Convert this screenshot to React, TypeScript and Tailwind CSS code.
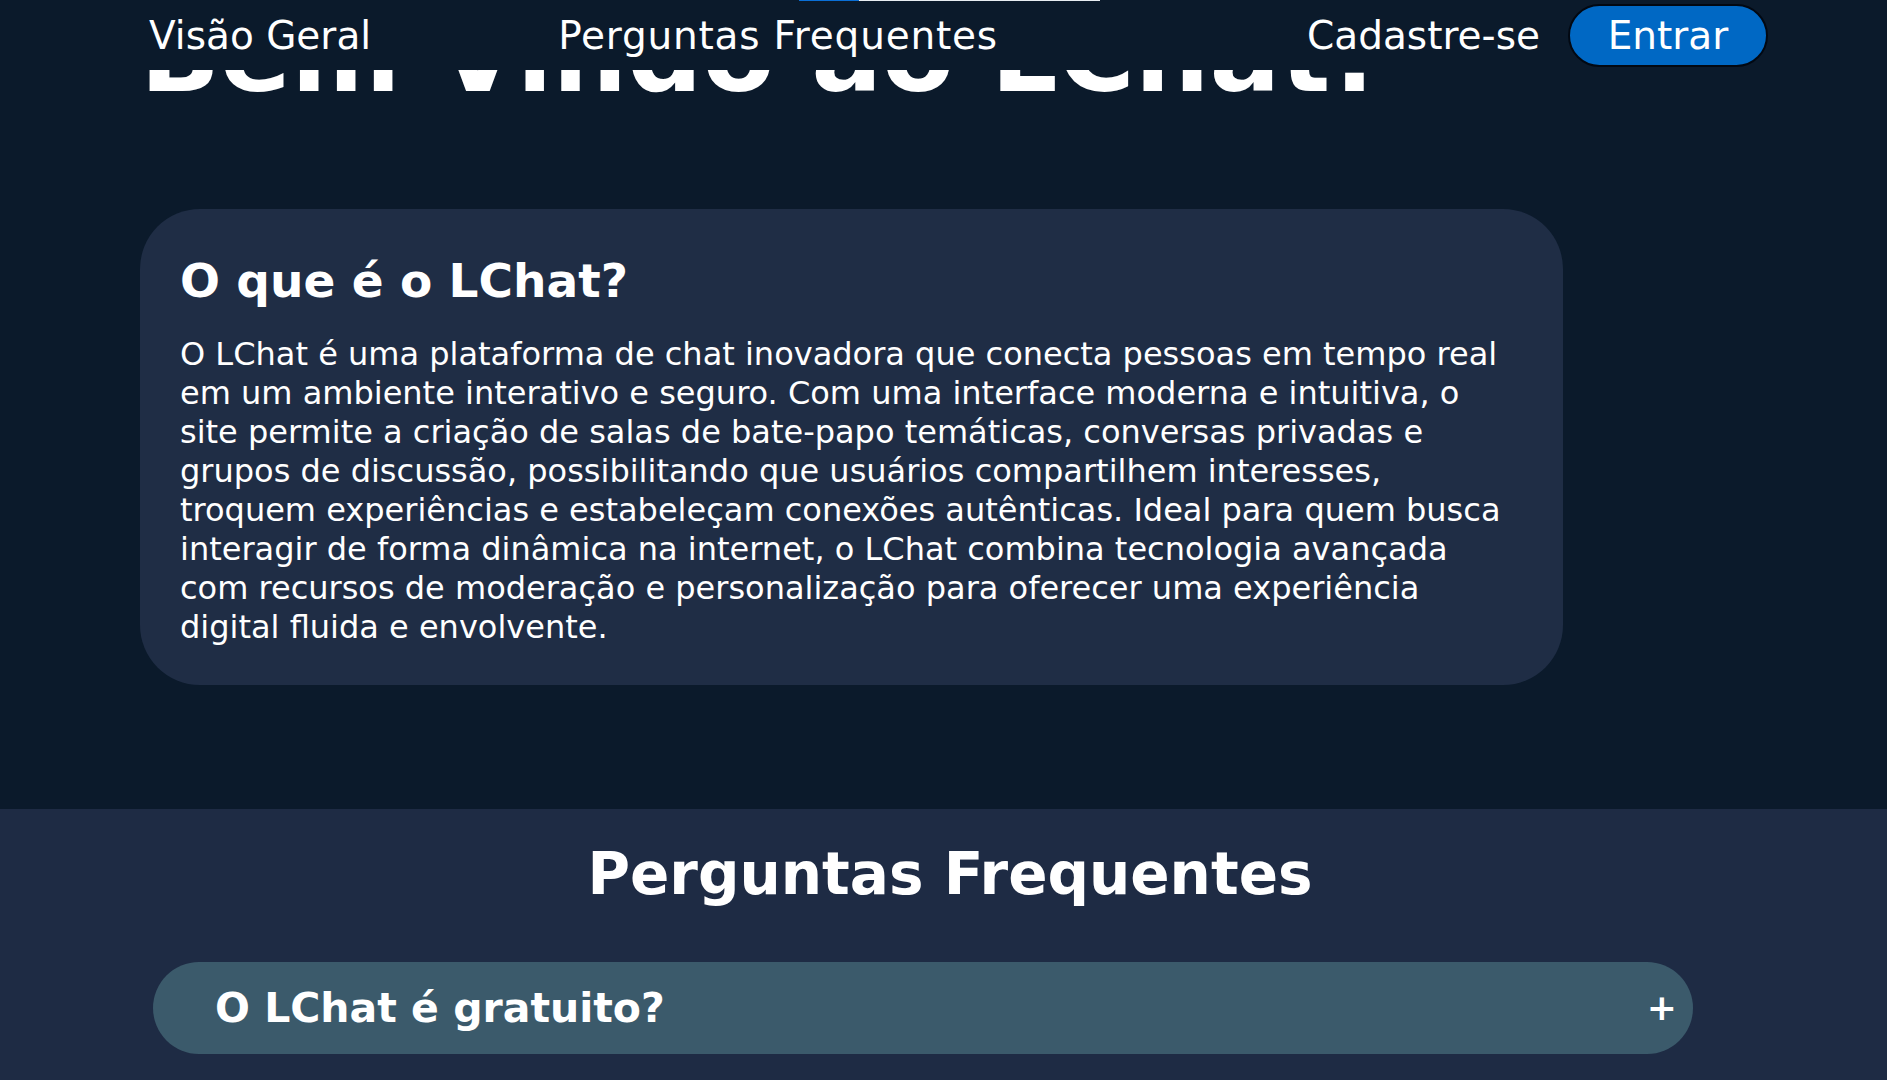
const navLink =
  "text-[39px] font-normal leading-none text-white hover:text-sky-300";

const about =
  "O LChat é uma plataforma de chat inovadora que conecta pessoas em tempo real em um ambiente interativo e seguro. Com uma interface moderna e intuitiva, o site permite a criação de salas de bate-papo temáticas, conversas privadas e grupos de discussão, possibilitando que usuários compartilhem interesses, troquem experiências e estabeleçam conexões autênticas. Ideal para quem busca interagir de forma dinâmica na internet, o LChat combina tecnologia avançada com recursos de moderação e personalização para oferecer uma experiência digital fluida e envolvente.";

function Header() {
  return (
    <header className="fixed inset-x-0 top-0 z-20 h-[70px] bg-[#0b1a2b]">
      <div className="absolute left-[799px] top-0 flex h-px">
        <span className="w-[60px] bg-[#0a6fd6]"></span>
        <span className="w-[241px] bg-[#e8edf2]"></span>
      </div>
      <nav className="flex h-full items-center pl-[149px] pr-[119px]">
        <a href="#visao" className={navLink}>
          Visão Geral
        </a>
        <a href="#faq" className={navLink + " ml-[187px] tracking-[0.02em]"}>
          Perguntas Frequentes
        </a>
        <div className="ml-auto flex items-center gap-[28px]">
          <a href="#cadastro" className={navLink}>
            Cadastre-se
          </a>
          <button className="flex h-[63px] w-[200px] items-center justify-center rounded-full border-2 border-[#020812] bg-[#0068c4] text-[39px] leading-none text-white">
            Entrar
          </button>
        </div>
      </nav>
    </header>
  );
}

function FaqItem({ question }: { question: string }) {
  return (
    <button className="flex h-[92px] w-[1540px] items-center justify-between rounded-full bg-[#3b5a6b] pl-[62px] pr-[16px] text-left">
      <span className="text-[41px] font-bold leading-none text-white">
        {question}
      </span>
      <span className="text-[36px] font-bold leading-none text-white">+</span>
    </button>
  );
}

export default function App() {
  return (
    <div className="min-h-screen bg-[#0b1a2b] font-['DejaVu_Sans',sans-serif] text-white">
      <Header />
      <main>
        <section id="visao" className="px-[140px] pb-[124px]">
          <h1 className="mt-[3px] text-[105px] font-bold leading-none">
            Bem Vindo ao LChat!
          </h1>
          <div className="mt-[101px] w-[1423px] rounded-[60px] bg-[#1f2d45] px-[40px] pb-[38px] pt-[48px]">
            <h2 className="text-[47px] font-bold leading-none">
              O que é o LChat?
            </h2>
            <p className="mt-[31px] max-w-[1340px] text-[32px] leading-[39px]">
              {about}
            </p>
          </div>
        </section>

        <section id="faq" className="bg-[#1e2b44] pb-[40px] pt-[36px]">
          <h2 className="pl-[13px] text-center text-[58px] font-bold leading-none">
            Perguntas Frequentes
          </h2>
          <div className="mt-[59px] flex flex-col gap-[40px] pl-[153px]">
            <FaqItem question="O LChat é gratuito?" />
            <FaqItem question="Como faço para criar uma sala?" />
          </div>
        </section>
      </main>
    </div>
  );
}
